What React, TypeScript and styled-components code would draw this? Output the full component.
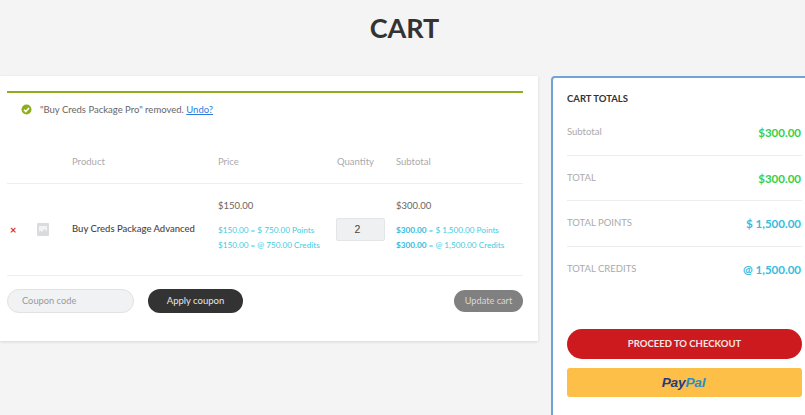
import React from "react";
import styled, { createGlobalStyle } from "styled-components";

const Global = createGlobalStyle`
  html, body { margin: 0; padding: 0; height: 100%; overflow: hidden; background: #f4f4f4; }
  body { font-family: Lato, "Liberation Sans", sans-serif; font-size: 9.5px; color: #555; }
  * { box-sizing: border-box; }
`;

const Page = styled.div`
  width: 805px;
  height: 415px;
  overflow: hidden;
`;
const Title = styled.h1`
  margin: 0;
  height: 76px;
  padding: 10px 0 0 4px;
  text-align: center;
  font-size: 27px;
  line-height: 36px;
  font-weight: 700;
  color: #333;
`;
const Columns = styled.div`
  display: flex;
  align-items: flex-start;
  gap: 13px;
  width: 840px;
`;
const MainCard = styled.section`
  width: 538px;
  height: 265px;
  flex: none;
  background: #fff;
  padding: 15px 15px 0 7px;
  box-shadow: 0 1px 3px rgba(0, 0, 0, 0.12);
`;
const Notice = styled.div`
  display: flex;
  align-items: center;
  gap: 8px;
  height: 34px;
  padding: 0 0 0 14px;
  border-top: 2px solid #8fae1b;
  color: #666;
  font-size: 9.5px;
  a { color: #2e7be0; text-decoration: underline; }
`;
const CartGrid = styled.div`
  display: grid;
  grid-template-columns: 65px 146px 119px 59px 1fr;
`;
const HeadRow = styled.div`
  display: contents;
`;
const Head = styled.div`
  height: 59px;
  padding-top: 30px;
  line-height: 14px;
  color: #aaa;
  font-size: 9.5px;
  border-bottom: 1px solid #eee;
`;
const RowCell = styled.div<{ $center?: boolean }>`
  height: 92px;
  border-bottom: 1px solid #eee;
  display: flex;
  flex-direction: column;
  justify-content: ${(p) => (p.$center ? "center" : "flex-start")};
`;
const ThumbCell = styled.div`
  height: 92px;
  border-bottom: 1px solid #eee;
  display: flex;
  align-items: center;
  padding-left: 3px;
  gap: 21px;
`;
const Remove = styled.span`
  color: #e0262e;
  font-size: 11px;
  font-weight: 700;
  width: 6px;
  line-height: 10px;
`;
const ProductName = styled.div`
  color: #444;
  font-size: 9.5px;
  font-weight: 500;
  line-height: 14px;
  margin-top: -1px;
`;
const Amount = styled.div`
  color: #666;
  font-size: 9.5px;
  line-height: 14px;
  margin: 15px 0 10px;
`;
const Rate = styled.div`
  color: #3fcbe0;
  font-size: 8.2px;
  line-height: 14.5px;
  white-space: nowrap;
  strong { font-weight: 700; color: #35bde0; }
`;
const QtyBox = styled.div`
  width: 49px;
  height: 23px;
  margin: -1px 0 0 -1px;
  background: #eff0f2;
  border: 1px solid #e4e5e7;
  border-radius: 2px;
  display: flex;
  align-items: center;
  justify-content: center;
  color: #444;
  font-family: "Liberation Sans", sans-serif;
  font-size: 10.5px;
  padding-right: 6px;
`;
const Actions = styled.div`
  display: flex;
  align-items: center;
  padding-top: 13px;
`;
const Coupon = styled.div`
  width: 127px;
  height: 24px;
  border-radius: 12px;
  background: #f1f2f4;
  border: 1px solid #e2e2e2;
  color: #999;
  font-size: 9.3px;
  line-height: 22px;
  padding-left: 14px;
`;
const Apply = styled.div`
  margin-left: 14px;
  width: 95px;
  height: 24px;
  border-radius: 12px;
  background: #333;
  color: #e6e6e6;
  font-size: 9.5px;
  line-height: 23px;
  text-align: center;
`;
const Update = styled.div`
  margin: 1px 0 0 auto;
  width: 69px;
  height: 22px;
  align-self: flex-start;
  border-radius: 11px;
  background: #808080;
  color: #d8d8d8;
  font-size: 9.2px;
  line-height: 21px;
  text-align: center;
`;
const Totals = styled.aside`
  width: 267px;
  height: 345px;
  flex: none;
  background: #fff;
  border: 2px solid #6fa5d6;
  border-radius: 4px 4px 0 0;
  padding: 14px 14px 0;
`;
const TotalsTitle = styled.h2`
  margin: 0 0 4px;
  font-size: 9.5px;
  line-height: 14px;
  font-weight: 700;
  color: #333;
`;
const TotalRow = styled.div<{ $last?: boolean }>`
  width: 235px;
  height: 45.5px;
  display: flex;
  justify-content: space-between;
  align-items: flex-start;
  padding: 15px 1px 0 0;
  border-bottom: ${(p) => (p.$last ? "none" : "1px solid #eceded")};
`;
const TotalLabel = styled.span`
  color: #aaa;
  font-size: 9.5px;
  line-height: 14px;
`;
const TotalValue = styled.span<{ $color: string }>`
  color: ${(p) => p.$color};
  font-size: 11.5px;
  font-weight: 700;
  line-height: 16px;
`;
const Checkout = styled.div`
  width: 235px;
  height: 30px;
  margin-top: 37px;
  border-radius: 15px;
  background: #cc1a1f;
  color: #f5e6e6;
  text-align: center;
  font-size: 9.5px;
  font-weight: 700;
  line-height: 29px;
`;
const PayPalBtn = styled.div`
  width: 235px;
  height: 29px;
  margin-top: 9px;
  padding-right: 2px;
  border-radius: 3px;
  background: #fdbf47;
  display: flex;
  align-items: center;
  justify-content: center;
  font-family: "Liberation Sans", sans-serif;
  font-size: 13.7px;
  font-weight: 700;
  font-style: italic;
  letter-spacing: -0.2px;
`;
const Pay = styled.span`
  color: #253b80;
`;
const Pal = styled.span`
  color: #2a8fc4;
`;

const Check = () => (
  <svg width="11" height="11" viewBox="0 0 11 11">
    <circle cx="5.5" cy="5.5" r="5" fill="#8fae1b" />
    <path d="M3 5.7l1.8 1.8L8 4" fill="none" stroke="#fff" strokeWidth="1.6" />
  </svg>
);
const Placeholder = () => (
  <svg width="12" height="13" viewBox="0 0 12 13">
    <rect width="12" height="13" rx="1" fill="#d9dbdd" />
    <path d="M2 3h8v5.5L7.5 6 5 9 3.5 7.5 2 9z" fill="#f2f3f4" />
  </svg>
);

const App = () => (
  <Page>
    <Global />
    <Title>CART</Title>
    <Columns>
      <MainCard>
        <Notice>
          <Check />
          <span>
            "Buy Creds Package Pro" removed. <a href="#">Undo?</a>
          </span>
        </Notice>
        <CartGrid>
          <HeadRow>
            <Head />
            <Head>Product</Head>
            <Head>Price</Head>
            <Head>Quantity</Head>
            <Head>Subtotal</Head>
          </HeadRow>
          <ThumbCell>
            <Remove>×</Remove>
            <Placeholder />
          </ThumbCell>
          <RowCell $center>
            <ProductName>Buy Creds Package Advanced</ProductName>
          </RowCell>
          <RowCell>
            <Amount>$150.00</Amount>
            <Rate>$150.00 = $ 750.00 Points</Rate>
            <Rate>$150.00 = @ 750.00 Credits</Rate>
          </RowCell>
          <RowCell $center>
            <QtyBox>2</QtyBox>
          </RowCell>
          <RowCell>
            <Amount>$300.00</Amount>
            <Rate><strong>$300.00</strong> = $ 1,500.00 Points</Rate>
            <Rate><strong>$300.00</strong> = @ 1,500.00 Credits</Rate>
          </RowCell>
        </CartGrid>
        <Actions>
          <Coupon>Coupon code</Coupon>
          <Apply>Apply coupon</Apply>
          <Update>Update cart</Update>
        </Actions>
      </MainCard>
      <Totals>
        <TotalsTitle>CART TOTALS</TotalsTitle>
        <TotalRow>
          <TotalLabel>Subtotal</TotalLabel>
          <TotalValue $color="#35d04a">$300.00</TotalValue>
        </TotalRow>
        <TotalRow>
          <TotalLabel>TOTAL</TotalLabel>
          <TotalValue $color="#35d04a">$300.00</TotalValue>
        </TotalRow>
        <TotalRow>
          <TotalLabel>TOTAL POINTS</TotalLabel>
          <TotalValue $color="#35bde0">$ 1,500.00</TotalValue>
        </TotalRow>
        <TotalRow $last>
          <TotalLabel>TOTAL CREDITS</TotalLabel>
          <TotalValue $color="#35bde0">@ 1,500.00</TotalValue>
        </TotalRow>
        <Checkout>PROCEED TO CHECKOUT</Checkout>
        <PayPalBtn>
          <Pay>Pay</Pay>
          <Pal>Pal</Pal>
        </PayPalBtn>
      </Totals>
    </Columns>
  </Page>
);

export default App;
